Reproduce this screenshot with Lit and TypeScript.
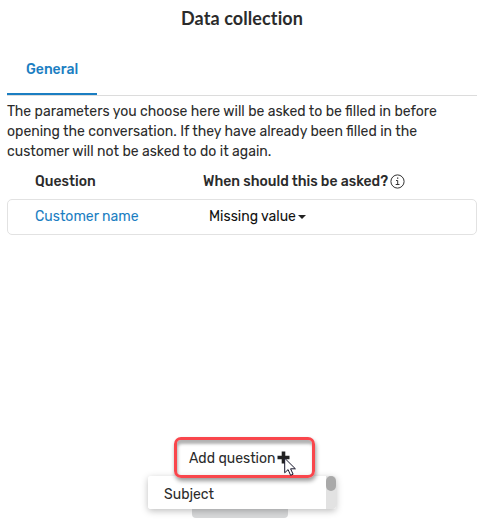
import { LitElement, html, css } from 'lit';
import { customElement } from 'lit/decorators.js';

/**
 * Dialog for choosing the questions asked before a conversation is opened.
 */
@customElement('app-root')
export class AppRoot extends LitElement {
    static styles = css`
        :host {
            display: flex;
            flex-direction: column;
            box-sizing: border-box;
            height: 526px;
            padding: 0 8px 0 7px;
            overflow: hidden;
            background: #fff;
            color: #2b2b2b;
            font: 14px/20px Rubik, Roboto, 'Liberation Sans', sans-serif;
            white-space: nowrap;
        }

        h1 {
            margin: 0;
            padding-top: 7px;
            height: 29px;
            box-sizing: border-box;
            font: 700 18px/22px Lato, sans-serif;
            text-align: center;
            letter-spacing: 0.1px;
        }

        .tabs {
            display: flex;
            height: 67px;
            box-sizing: border-box;
            border-bottom: 1px solid #dcdcdc;
            padding-top: 17px;
        }

        .tab {
            box-sizing: border-box;
            width: 90px;
            height: 49px;
            padding: 14px 0 0 19px;
            border-bottom: 2px solid #1b7ec2;
            color: #1b7ec2;
            font-weight: 500;
        }

        .description {
            margin: 0;
            padding-top: 6px;
        }

        .line {
            display: block;
        }

        .row {
            display: grid;
            grid-template-columns: 168px 1fr;
            padding-left: 28px;
        }

        .header {
            padding-top: 10px;
            height: 27px;
            font-weight: 500;
        }

        .when {
            display: flex;
            align-items: center;
            gap: 2px;
            height: 20px;
        }

        .info {
            margin-top: -1px;
        }

        .question {
            box-sizing: border-box;
            height: 36px;
            padding: 7px 0 0 27px;
            border: 1px solid #e2e2e2;
            border-radius: 5px;
        }

        .name {
            color: #1b7ec2;
        }

        .select {
            display: flex;
            align-items: center;
            height: 20px;
            padding-left: 6px;
            color: #111;
        }

        .caret {
            margin: 0 0 1px 2px;
            border: 4px solid transparent;
            border-top-color: #222;
            border-bottom: 0;
        }

        .actions {
            display: flex;
            flex-direction: column;
            margin: auto 0 8px 141px;
        }

        .add {
            position: relative;
            z-index: 1;
            display: flex;
            align-items: center;
            box-sizing: border-box;
            width: 141px;
            height: 41px;
            margin: 0 0 -2px 26px;
            padding: 2px 0 0 12px;
            border: 3px solid #f9464c;
            border-radius: 7px;
            box-shadow: 1px 3px 4px rgba(0, 0, 0, 0.4), inset 1px 4px 3px rgba(0, 0, 0, 0.3);
        }

        .plus {
            margin: -2px 0 0 1px;
        }

        .cursor {
            position: absolute;
            left: 107px;
            top: 17px;
        }

        .menu {
            display: flex;
            justify-content: space-between;
            width: 188px;
            height: 33px;
            border-radius: 3px;
            overflow: hidden;
            background: #fff;
        }

        .menu-shadow {
            position: relative;
            width: 188px;
            border-radius: 3px;
            box-shadow: 0 2px 7px rgba(0, 0, 0, 0.26);
        }

        .option {
            padding: 9px 0 0 16px;
        }

        .scrollbar {
            width: 10px;
            background: #e2e2e2;
        }

        .thumb {
            height: 15px;
            border-radius: 5px;
            background: #a9a9a9;
        }

        .submit {
            width: 96px;
            height: 9px;
            margin-left: 44px;
            border-radius: 0 0 4px 4px;
            background: #d8d9da;
        }

        svg {
            display: block;
            flex: none;
        }
    `;

    render() {
        return html`
            <h1>Data collection</h1>

            <div class="tabs"><div class="tab">General</div></div>

            <p class="description">
                <span class="line">The parameters you choose here will be asked to be filled in before</span>
                <span class="line">opening the conversation. If they have already been filled in the</span>
                <span class="line">customer will not be asked to do it again.</span>
            </p>

            <div class="row header">
                <span>Question</span>
                <div class="when">
                    <span>When should this be asked?</span>
                    <svg class="info" width="15" height="15" viewBox="0 0 15 15" fill="none" stroke="#333">
                        <circle cx="7.5" cy="7.5" r="6.6" />
                        <path d="M6 6.5h1.7v4M5.7 10.5h3.8" />
                        <path d="M7 4.2h1.3" stroke-width="1.3" />
                    </svg>
                </div>
            </div>

            <div class="row question">
                <span class="name">Customer name</span>
                <div class="select"><span>Missing value</span><i class="caret"></i></div>
            </div>

            <div class="actions">
                <div class="add">
                    <span>Add question</span>
                    <svg class="plus" width="13" height="13" viewBox="0 0 13 13">
                        <path d="M6.5 .5v12M.5 6.5h12" stroke="#222" stroke-width="3.6" />
                    </svg>
                    <svg class="cursor" width="13" height="20" viewBox="0 0 13 20">
                        <path
                            d="M.7 1.2v14.6l3.4-3.2 2.5 5.7 2.5-1.1-2.5-5.4h4.8z"
                            fill="#fff"
                            stroke="#15152a"
                        />
                    </svg>
                </div>
                <div class="menu-shadow">
                    <div class="menu">
                        <span class="option">Subject</span>
                        <div class="scrollbar"><div class="thumb"></div></div>
                    </div>
                </div>
                <div class="submit"></div>
            </div>
        `;
    }
}
